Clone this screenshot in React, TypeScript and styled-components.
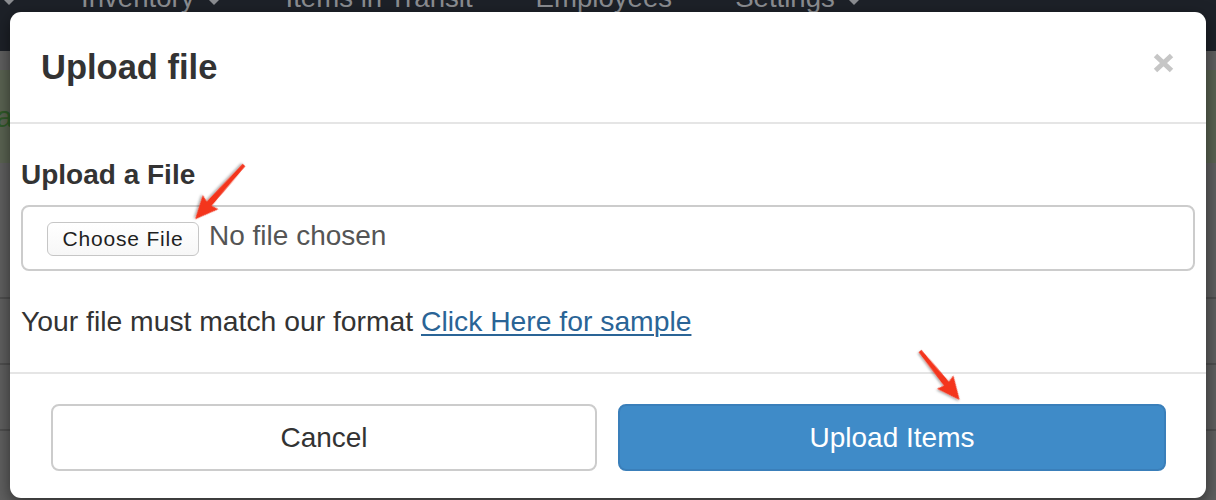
import React from "react";
import styled, { createGlobalStyle } from "styled-components";

const Global = createGlobalStyle`
  html, body { margin: 0; padding: 0; }
  body { font-family: "Liberation Sans", Arial, sans-serif; background: #5f5f5f; }
  * { box-sizing: border-box; }
`;

const Screen = styled.div`
  position: relative;
  width: 1216px;
  height: 500px;
  overflow: hidden;
  background: #5f5f5f;
`;

/* ---------- page behind the dialog ---------- */
const NavBar = styled.div`
  height: 51px;
  background: #1d2128;
  overflow: hidden;
`;

const NavRow = styled.div`
  display: flex;
  align-items: center;
  gap: 63px;
  margin-top: -16px;
  padding-left: 0;
  height: 27px;
  font-size: 27.6px;
  line-height: 27px;
  color: #8a8c90;
`;

const NavItem = styled.div`
  display: flex;
  align-items: center;
  white-space: nowrap;
`;

const Caret = styled.span<{ $gap?: number }>`
  display: inline-block;
  width: 0;
  height: 0;
  margin-left: ${(p) => p.$gap ?? 0}px;
  margin-top: 6px;
  border-left: 9.5px solid transparent;
  border-right: 9.5px solid transparent;
  border-top: 9px solid #8a8c90;
`;

const Content = styled.div`
  padding-top: 19px;
`;

const Alert = styled.div`
  height: 93px;
  background: #5a6352;
  color: #2f5a28;
  font-size: 30px;
  line-height: 93px;
  white-space: nowrap;
  overflow: hidden;
`;

const AlertText = styled.span`
  margin-left: -4px;
`;

const Table = styled.div`
  margin-top: 134px;
`;

const TableRow = styled.div`
  height: 66px;
  border-top: 2px solid #4e4e4e;
`;

/* ---------- dialog ---------- */
const Modal = styled.div`
  position: absolute;
  left: 10px;
  top: 12px;
  width: 1196px;
  height: 486px;
  background: #ffffff;
  border-radius: 11px;
  box-shadow: 0 5px 15px rgba(0, 0, 0, 0.5);
  display: flex;
  flex-direction: column;
  color: #333333;
`;

const Header = styled.div`
  height: 112px;
  padding: 0 32px 0 31px;
  border-bottom: 2px solid #e5e5e5;
  display: flex;
  align-items: center;
  justify-content: space-between;
`;

const Title = styled.h4`
  margin: 0;
  font-size: 34.5px;
  font-weight: bold;
  line-height: 40px;
  color: #333333;
`;

const CloseButton = styled.button`
  align-self: flex-start;
  margin-top: 41px;
  width: 21px;
  height: 20px;
  padding: 0;
  border: 0;
  background: none;
  display: flex;
  cursor: pointer;
`;

const Body = styled.div`
  padding: 31px 11px 31px 11px;
  border-bottom: 2px solid #e5e5e5;
`;

const Label = styled.label`
  display: block;
  font-size: 28px;
  font-weight: bold;
  line-height: 40px;
  margin-bottom: 10px;
`;

const FileField = styled.div`
  height: 66px;
  border: 2px solid #cccccc;
  border-radius: 8px;
  padding-left: 24px;
  display: flex;
  align-items: center;
  gap: 10px;
`;

const ChooseButton = styled.button`
  height: 34px;
  width: 152px;
  padding: 0;
  border: 1px solid #c6c6c6;
  border-radius: 6px;
  background: linear-gradient(#ffffff, #f7f7f7);
  font-family: "Liberation Sans", Arial, sans-serif;
  font-size: 21px;
  letter-spacing: 0.8px;
  color: #1f1f1f;
  margin-top: 2px;
`;

const FileName = styled.span`
  font-size: 28px;
  line-height: 40px;
  color: #555555;
  margin-top: -5px;
`;

const Hint = styled.p`
  margin: 30px 0 0;
  font-size: 28.3px;
  line-height: 40px;
  color: #333333;
`;

const SampleLink = styled.a`
  color: #2a6496;
  text-decoration: underline;
  text-decoration-thickness: 2px;
  text-underline-offset: 3px;
`;

const Footer = styled.div`
  padding: 30px 40px 27px 41px;
  display: grid;
  grid-template-columns: 546px 548px;
  gap: 21px;
`;

const Button = styled.button<{ $primary?: boolean }>`
  height: 67px;
  border-radius: 8px;
  border: 2px solid ${(p) => (p.$primary ? "#3a7fba" : "#cccccc")};
  background: ${(p) => (p.$primary ? "#3f8bc8" : "#ffffff")};
  color: ${(p) => (p.$primary ? "#ffffff" : "#333333")};
  font-family: "Liberation Sans", Arial, sans-serif;
  font-size: 28px;
  cursor: pointer;
`;

/* ---------- annotation arrows ---------- */
const ArrowLayer = styled.svg`
  position: absolute;
  left: 0;
  top: 0;
  pointer-events: none;
`;

const Arrow = ({ x, y, len, angle }: { x: number; y: number; len: number; angle: number }) => {
  const L = len;
  const pts = [
    [0, -1.8],
    [L - 21, -3.2],
    [L - 23, -10.5],
    [L, 0],
    [L - 23, 10.5],
    [L - 21, 3.2],
    [0, 1.8],
  ]
    .map((p) => p.join(","))
    .join(" ");
  return (
    <g transform={`translate(${x} ${y}) rotate(${angle})`} filter="url(#arrowShadow)">
      <polygon points={pts} fill="#f4341f" />
    </g>
  );
};

export default function App() {
  return (
    <Screen>
      <Global />
      <NavBar>
        <NavRow>
          <NavItem>
            <Caret />
          </NavItem>
          <NavItem>
            Inventory
            <Caret $gap={10} />
          </NavItem>
          <NavItem>Items in Transit</NavItem>
          <NavItem>Employees</NavItem>
          <NavItem>
            Settings
            <Caret $gap={10} />
          </NavItem>
        </NavRow>
      </NavBar>
      <Content>
        <Alert>
          <AlertText>a</AlertText>
        </Alert>
        <Table>
          <TableRow />
          <TableRow />
          <TableRow />
        </Table>
      </Content>

      <Modal role="dialog">
        <Header>
          <Title>Upload file</Title>
          <CloseButton aria-label="Close">
            <svg width="21" height="20" viewBox="0 0 21 20">
              <path d="M2.5 2.5 L18.5 17.5 M18.5 2.5 L2.5 17.5" stroke="#c6c6c6" strokeWidth="5" />
            </svg>
          </CloseButton>
        </Header>
        <Body>
          <Label>Upload a File</Label>
          <FileField>
            <ChooseButton>Choose File</ChooseButton>
            <FileName>No file chosen</FileName>
          </FileField>
          <Hint>
            Your file must match our format <SampleLink href="#">Click Here for sample</SampleLink>
          </Hint>
        </Body>
        <Footer>
          <Button>Cancel</Button>
          <Button $primary>Upload Items</Button>
        </Footer>
      </Modal>

      <ArrowLayer width="1216" height="500" viewBox="0 0 1216 500">
        <defs>
          <filter id="arrowShadow" x="-20%" y="-20%" width="140%" height="140%">
            <feDropShadow dx="0.5" dy="1.5" stdDeviation="1.2" floodColor="#000" floodOpacity="0.35" />
          </filter>
        </defs>
        <Arrow x={244} y={165} len={73} angle={132} />
        <Arrow x={920} y={351} len={63} angle={51} />
      </ArrowLayer>
    </Screen>
  );
}
